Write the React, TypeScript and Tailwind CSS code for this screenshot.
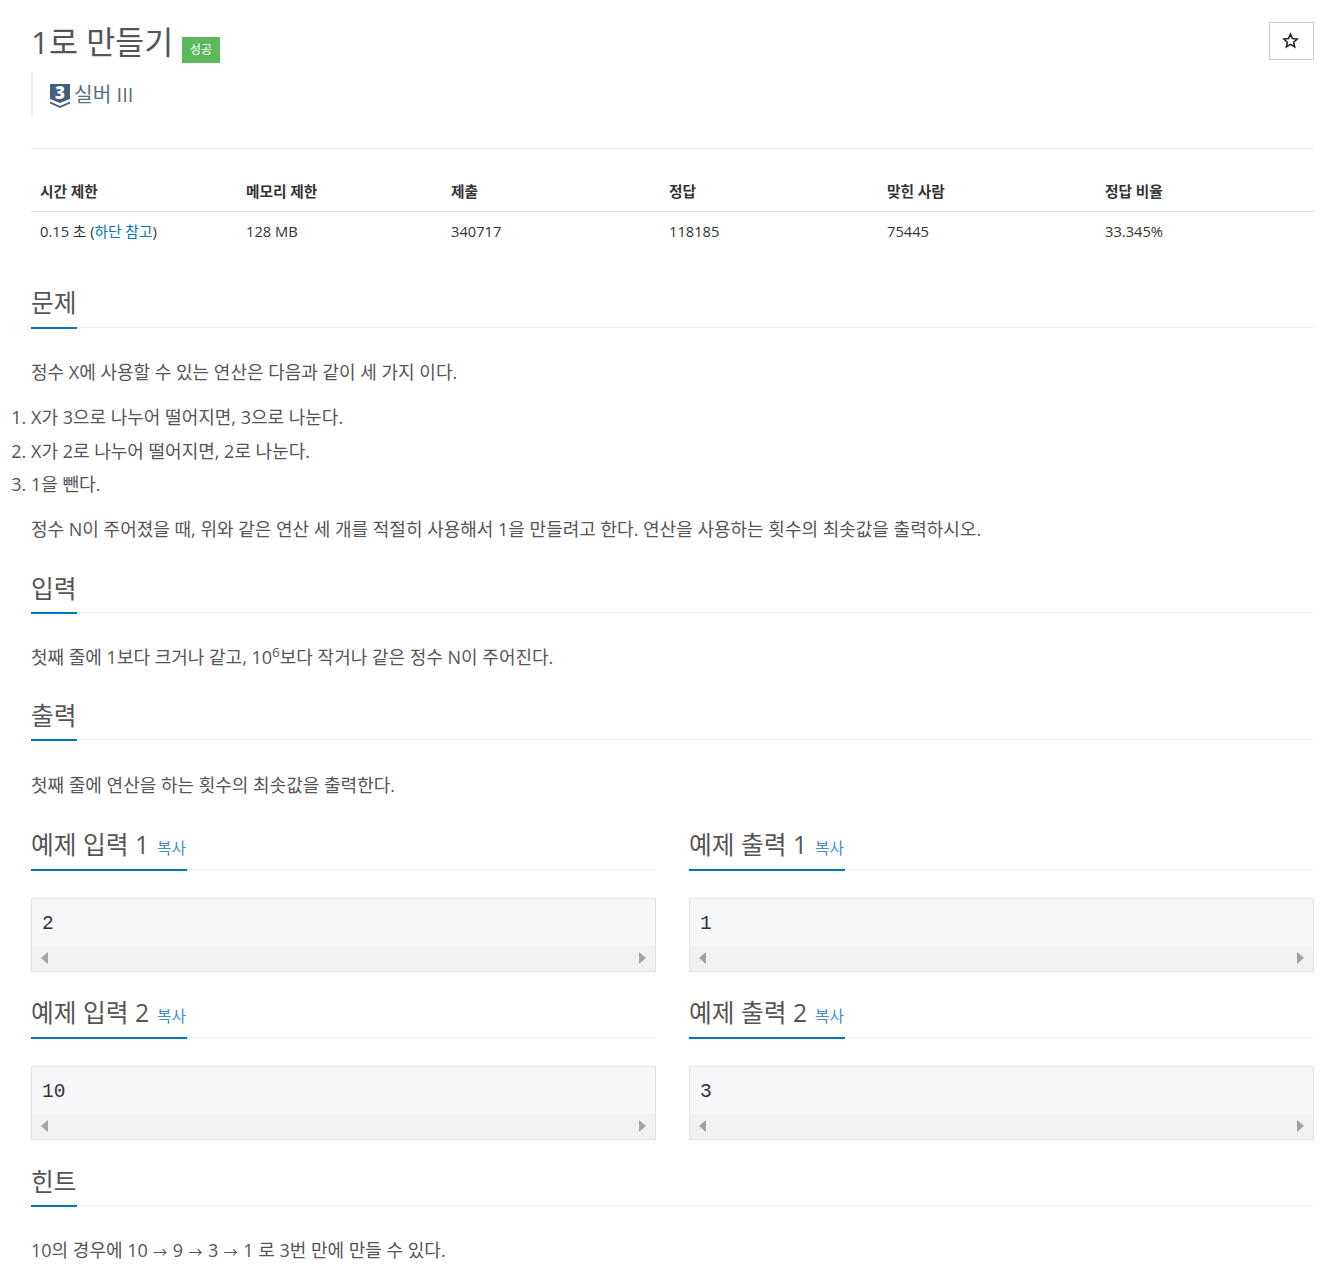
const sans = "font-['Open_Sans','Noto_Sans_CJK_KR',sans-serif]";

function Section({ title, children, copy, raised, className = "" }: { title: string; children?: React.ReactNode; copy?: boolean; raised?: boolean; className?: string }) {
  return (
    <section className={className}>
      <div className="border-b border-dotted border-[#e4e4e4] h-[43px]">
        <h2 className={`inline-flex items-baseline h-[44px] border-b-2 border-[#0076c0] text-[24.750px] leading-[34px] text-[#555] font-normal box-border ${copy || raised ? "pt-[1px]" : "pt-[2px]"} ${copy ? "pr-[1px]" : ""}`}>
          {title}
          {copy && <a className="ml-[8px] text-[15.750px] text-[#428bca]">복사</a>}
        </h2>
      </div>
      {children}
    </section>
  );
}

function SampleBox({ value }: { value: string }) {
  return (
    <div className="mt-[28px] h-[74px] border border-[#e1e1e8] bg-[#f7f7f9] flex flex-col">
      <pre className="h-[47px] px-[10px] pt-[11px] font-['Liberation_Mono',monospace] text-[19.500px] leading-[28px] text-[#333]">{value}</pre>
      <div className="h-[25px] bg-[#f1f1f1] flex items-center justify-between pl-[9px] pr-[9px]">
        <svg width="7" height="12" viewBox="0 0 7 12"><path d="M7 0v12L0 6z" fill="#a3a3a3" /></svg>
        <svg width="7" height="12" viewBox="0 0 7 12"><path d="M0 0v12l7-6z" fill="#a3a3a3" /></svg>
      </div>
    </div>
  );
}

function Samples({ n, input, output }: { n: number; input: string; output: string }) {
  return (
    <div className="grid grid-cols-2 gap-x-[33px]">
      <Section title={`예제 입력 ${n}`} copy><SampleBox value={input} /></Section>
      <Section title={`예제 출력 ${n}`} copy><SampleBox value={output} /></Section>
    </div>
  );
}

const cols = "grid grid-cols-[206px_205px_218px_218px_218px_1fr] px-[9px]";

function Arrow() {
  return <span className="text-[14px] mx-[0.800px]">→</span>;
}

export default function App() {
  return (
    <div className={`${sans} pl-[31px] pr-[25px] h-[1283px] bg-white text-[#555] overflow-hidden`}>
      <div className="flex items-start justify-between pt-[22px]">
        <div className="flex items-start">
          <h1 className="text-[31.500px] leading-[40px] font-normal text-[#555]">1로 만들기</h1>
          <span className="ml-[9px] mt-[15px] w-[38px] h-[26px] bg-[#5cb85c] text-white text-[12px] flex items-center justify-center">성공</span>
        </div>
        <button className="w-[45px] h-[38px] border border-[#ccc] flex items-center justify-center bg-white">
          <svg width="17" height="17" viewBox="0 0 24 24" fill="none" stroke="#222" strokeWidth="2.200" strokeLinejoin="miter" className="-mt-[2px] -ml-[2px]">
            <path d="M12 3l2.700 6.200 6.800.7-5.100 4.500 1.500 6.600L12 17.500 6.100 21l1.500-6.600L2.500 9.900l6.800-.7z" />
          </svg>
        </button>
      </div>
      <div className="mt-[10px] h-[43px] border-l-2 border-[#eee] pl-[17px] flex items-start">
        <svg width="20" height="24" viewBox="0 0 20 24" className="mt-[11px] overflow-visible">
          <path d="M0 0h20v15l-10 4-10-4z" fill="#435f7a" />
          <path d="M0 17.500l10 4.500 10-4.500v2l-10 4.500L0 19.500z" fill="#435f7a" />
          <text x="10" y="14.500" textAnchor="middle" fontSize="17" fontWeight="800" fill="#fff" fontFamily="'Open Sans',sans-serif">3</text>
        </svg>
        <span className="ml-[4px] mt-[5px] text-[20.250px] leading-[32px] text-[#5d6d7e]">실버 III</span>
      </div>
      <hr className="mt-[32px] border-0 border-t border-[#eee]" />

      <div className="mt-[30px] text-[14.700px] text-[#333]">
        <div className={`${cols} h-[33px] border-b border-[#ddd] font-bold leading-[24px]`}>
          <div>시간 제한</div><div>메모리 제한</div><div>제출</div><div>정답</div><div>맞힌 사람</div><div>정답 비율</div>
        </div>
        <div className={`${cols} h-[38px] items-center`}>
          <div>0.15 초 (<a className="text-[#0076c0]">하단 참고</a>)</div><div>128 MB</div><div>340717</div><div>118185</div><div>75445</div><div>33.345%</div>
        </div>
      </div>

      <Section title="문제" raised className="mt-[35px]">
        <div className="text-[18px] leading-[29px]">
          <p className="mt-[30px]">정수 X에 사용할 수 있는 연산은 다음과 같이 세 가지 이다.</p>
          <ol className="list-decimal mt-[16px]">
            <li className="h-[33.500px]">X가 3으로 나누어 떨어지면, 3으로 나눈다.</li>
            <li className="h-[33.500px]">X가 2로 나누어 떨어지면, 2로 나눈다.</li>
            <li className="h-[33.500px]">1을 뺀다.</li>
          </ol>
          <p className="mt-[11px]">정수 N이 주어졌을 때, 위와 같은 연산 세 개를 적절히 사용해서 1을 만들려고 한다. 연산을 사용하는 횟수의 최솟값을 출력하시오.</p>
        </div>
      </Section>

      <Section title="입력" className="mt-[26px]">
        <p className="mt-[30px] text-[18px] leading-[29px]">첫째 줄에 1보다 크거나 같고, 10<sup className="text-[13.500px]">6</sup>보다 작거나 같은 정수 N이 주어진다.</p>
      </Section>

      <Section title="출력" className="mt-[25px]">
        <p className="mt-[31px] text-[18px] leading-[29px]">첫째 줄에 연산을 하는 횟수의 최솟값을 출력한다.</p>
      </Section>

      <div className="mt-[27px]"><Samples n={1} input="2" output="1" /></div>
      <div className="mt-[23px]"><Samples n={2} input="10" output="3" /></div>

      <Section title="힌트" className="mt-[23px]">
        <p className="mt-[30px] text-[18px] leading-[29px]">10의 경우에 10 <Arrow /> 9 <Arrow /> 3 <Arrow /> 1 로 3번 만에 만들 수 있다.</p>
      </Section>
    </div>
  );
}
